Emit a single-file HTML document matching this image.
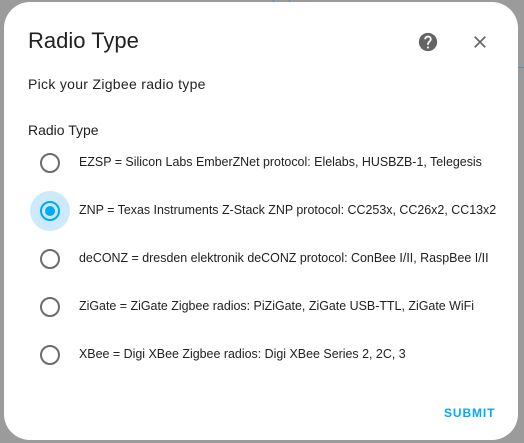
<html><head><style>
body{margin:0;width:524px;height:443px;background:#9b9b9b;position:relative;overflow:hidden;font-family:"Liberation Sans",sans-serif;color:#212121}
.d{position:absolute;left:4px;top:2px;width:514px;height:438px;background:#fff;border-radius:26px}
.t{position:absolute;left:28px;top:28px;font-size:22px}
.s{position:absolute;left:28px;top:76px;font-size:14px;letter-spacing:.3px}
.l{position:absolute;left:28px;top:122px;font-size:14px}
.c{position:absolute;left:40px;width:16px;height:16px;border:2px solid #6d6d6d;border-radius:50%}
.x{position:absolute;left:79px;font-size:12.45px;white-space:nowrap}
.sub{position:absolute;left:444px;top:406px;font-size:12px;color:#03a9f4;letter-spacing:.9px;font-weight:bold}
</style></head><body>
<div style="position:absolute;left:273px;top:0;width:1px;height:3px;background:#4a8fd0"></div>
<div style="position:absolute;left:289px;top:0;width:1px;height:3px;background:#4a8fd0"></div>
<div style="position:absolute;left:518px;top:67px;width:6px;height:1px;background:#4a8fd0"></div>
<div class="d"></div>
<div class="t">Radio Type</div>
<svg style="position:absolute;left:417px;top:31px" width="22" height="22" viewBox="0 0 24 24"><path fill="#646464" d="M15.07 11.25l-.9.92C13.45 12.890 13 13.5 13 15h-2v-.5c0-1.11.45-2.11 1.17-2.83l1.24-1.26c.37-.36.59-.86.59-1.410a2 2 0 0 0-2-2 2 2 0 0 0-2 2H8a4 4 0 0 1 4-4 4 4 0 0 1 4 4c0 .88-.36 1.67-.93 2.25M13 19h-2v-2h2M12 2A10 10 0 0 0 2 12a10 10 0 0 0 10 10 10 10 0 0 0 10-10c0-5.53-4.5-10-10-10z"/></svg>
<svg style="position:absolute;left:470px;top:32px" width="20" height="20" viewBox="0 0 24 24"><path fill="#646464" d="M19 6.41L17.59 5 12 10.59 6.41 5 5 6.41 10.59 12 5 17.59 6.41 19 12 13.41 17.59 19 19 17.59 13.41 12z"/></svg>
<div class="s">Pick your Zigbee radio type</div>
<div class="l">Radio Type</div>
<div class="c" style="top:153px"></div><div class="x" style="top:155px">EZSP = Silicon Labs EmberZNet protocol: Elelabs, HUSBZB-1, Telegesis</div>
<div style="position:absolute;left:30px;top:191px;width:40px;height:40px;border-radius:50%;background:#cdeafc"></div>
<div class="c" style="top:201px;border-color:#03a9f4"></div>
<div style="position:absolute;left:45px;top:206px;width:10px;height:10px;border-radius:50%;background:#03a9f4"></div>
<div class="x" style="top:203px">ZNP = Texas Instruments Z-Stack ZNP protocol: CC253x, CC26x2, CC13x2</div>
<div class="c" style="top:249px"></div><div class="x" style="top:251px">deCONZ = dresden elektronik deCONZ protocol: ConBee I/II, RaspBee I/II</div>
<div class="c" style="top:297px"></div><div class="x" style="top:299px">ZiGate = ZiGate Zigbee radios: PiZiGate, ZiGate USB-TTL, ZiGate WiFi</div>
<div class="c" style="top:345px"></div><div class="x" style="top:347px">XBee = Digi XBee Zigbee radios: Digi XBee Series 2, 2C, 3</div>
<div class="sub">SUBMIT</div>
</body></html>
